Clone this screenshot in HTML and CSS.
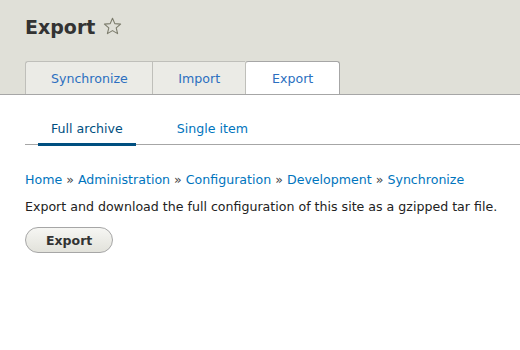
FILE: index.html
```html
<!DOCTYPE html>
<html>
<head>
<meta charset="utf-8">
<link rel="stylesheet" href="styles.css">
</head>
<body>
<header class="page-header">
  <div class="title-row">
    <h1 class="page-title">Export</h1>
    <svg class="star" width="19" height="18" viewBox="0 0 19 18" aria-hidden="true">
      <path d="M9.5 1.2 L11.8 6.6 L17.6 7.1 L13.2 10.9 L14.6 16.6 L9.5 13.6 L4.4 16.6 L5.8 10.9 L1.4 7.1 L7.2 6.6 Z" fill="none" stroke="#7c7c6c" stroke-width="1.1" stroke-linejoin="round"/>
    </svg>
  </div>
  <ul class="tabs-primary">
    <li class="tab"><a href="#">Synchronize</a></li>
    <li class="tab"><a href="#">Import</a></li>
    <li class="tab is-active"><a href="#">Export</a></li>
  </ul>
</header>
<main class="content">
  <ul class="tabs-secondary">
    <li class="subtab is-active"><a href="#">Full archive</a></li>
    <li class="subtab"><a href="#">Single item</a></li>
  </ul>
  <nav class="breadcrumb">
    <a href="#">Home</a> » <a href="#">Administration</a> » <a href="#">Configuration</a> » <a href="#">Development</a> » <a href="#">Synchronize</a>
  </nav>
  <p class="description">Export and download the full configuration of this site as a gzipped tar file.</p>
  <button class="button">Export</button>
</main>
</body>
</html>
```
FILE: styles.css
```css
html, body {
  margin: 0;
  padding: 0;
  background: #fff;
}
body {
  font-family: "DejaVu Sans", Verdana, sans-serif;
  font-size: 12.6px;
  line-height: 20px;
  color: #222;
}
a {
  color: #0074bd;
  text-decoration: none;
}
.page-header {
  background: #e0e0d8;
  border-bottom: 1px solid #a6a6a6;
  padding: 0 25px;
}
.title-row {
  display: flex;
  align-items: center;
  gap: 8px;
  height: 61px;
  padding-bottom: 8px;
  box-sizing: border-box;
}
.page-title {
  margin: 0;
  font-size: 19px;
  line-height: 24px;
  font-weight: bold;
  color: #333;
}
.star {
  display: block;
  margin-top: -1px;
}
.tabs-primary {
  display: flex;
  list-style: none;
  margin: 0;
  padding: 0;
}
.tab a {
  display: block;
  height: 32px;
  line-height: 34px;
  padding: 0 25px;
  background: #ebebe6;
  border: 1px solid #bfbfba;
  border-bottom: 0;
  border-right: 0;
  color: #2b6fc0;
}
.tab:first-child a {
  padding-right: 24.5px;
  border-top-left-radius: 3px;
}
.tab.is-active a {
  background: #fff;
  padding: 0 26px;
  border-right: 1px solid #a6a6a6;
  border-top-color: #a6a6a6;
  border-radius: 3px 3px 0 0;
  color: #2b6fc0;
}
.content {
  padding: 22px 0 0 25px;
}
.tabs-secondary {
  display: flex;
  list-style: none;
  margin: 0;
  padding: 0 0 0 13px;
  border-bottom: 1px solid #a6a6a6;
}
.subtab {
  margin-right: 28px;
  margin-bottom: -2px;
}
.subtab a {
  display: block;
  padding: 2px 13px 4px;
  border-bottom: 3px solid transparent;
  color: #0074bd;
}
.subtab.is-active a {
  color: #004f80;
  border-bottom-color: #004f80;
}
.breadcrumb {
  margin-top: 25px;
  color: #444;
  padding-right: 25px;
}
.breadcrumb a {
  color: #0074bd;
}
.description {
  margin: 7px 0 0;
}
.button {
  margin-top: 10px;
  font-family: inherit;
  font-size: 12.5px;
  font-weight: bold;
  color: #333;
  height: 26px;
  padding: 0 20px;
  border: 1px solid #a6a6a6;
  border-radius: 20em;
  background: linear-gradient(to bottom, #f6f6f3, #e2e2db);
  cursor: pointer;
}
```
